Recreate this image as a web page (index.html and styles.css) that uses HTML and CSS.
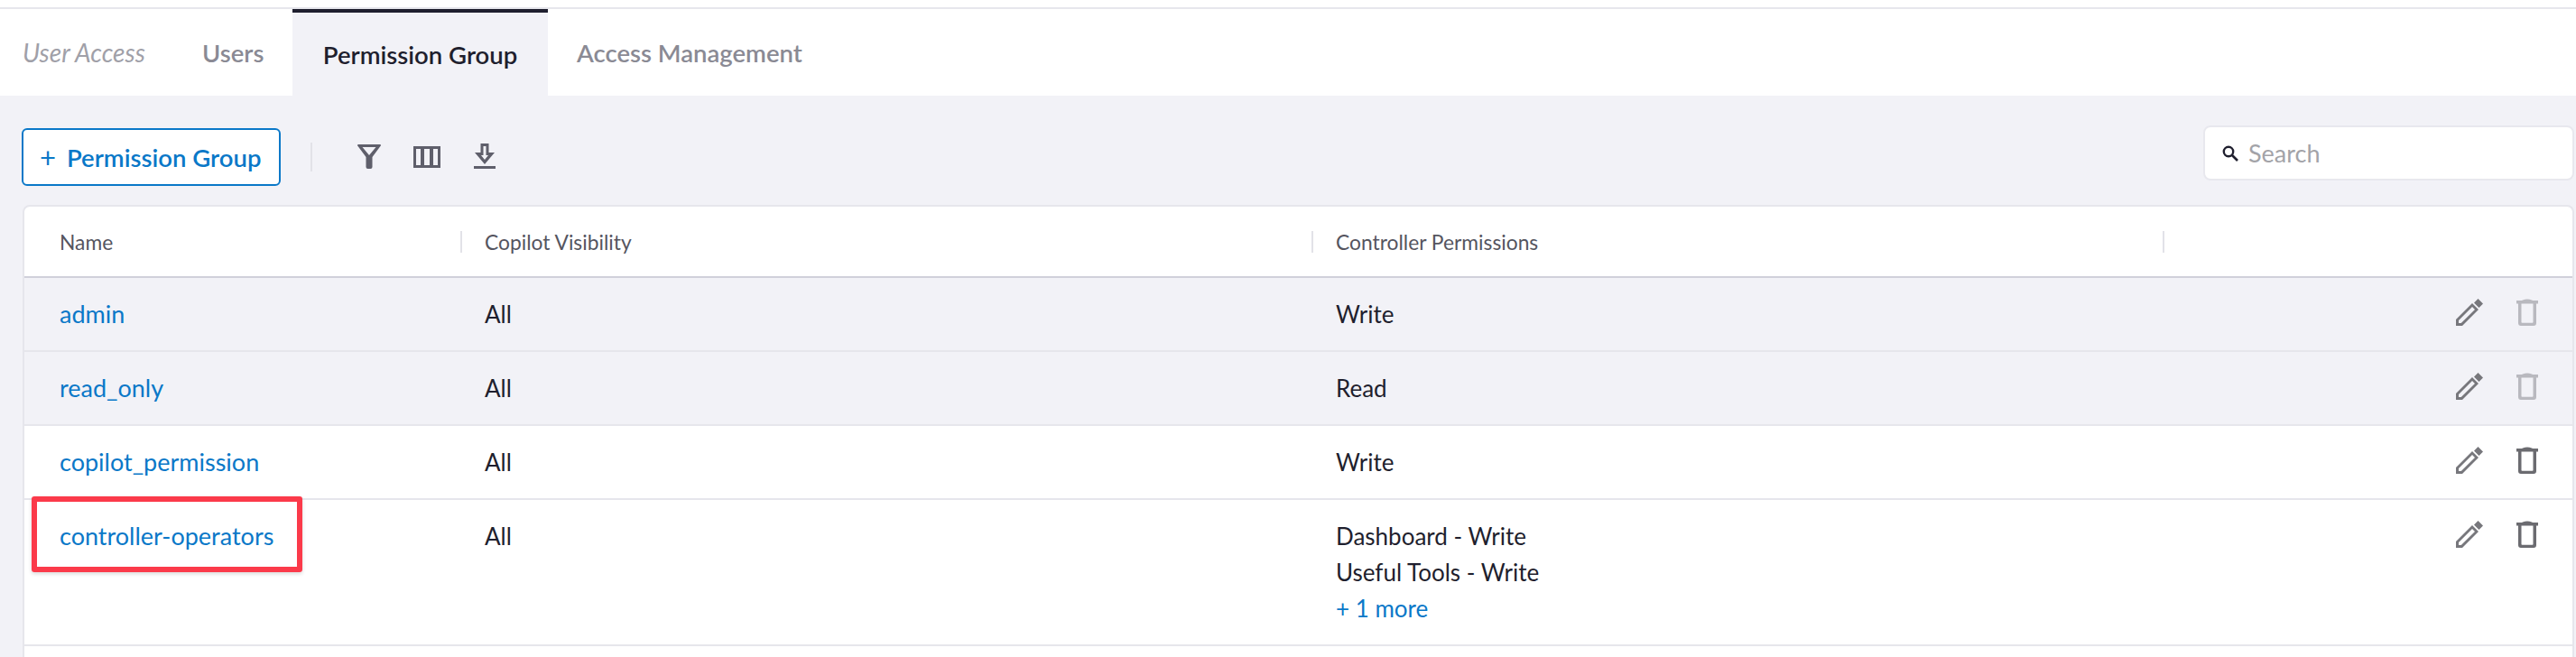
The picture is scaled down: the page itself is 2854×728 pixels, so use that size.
FILE: index.html
```html
<!DOCTYPE html>
<html lang="en">
<head>
    <meta charset="UTF-8">
    <title>Permission Group</title>
    <link rel="stylesheet" href="styles.css">
</head>
<body>
    <div class="top-strip"></div>
    <nav class="tabs">
        <span class="tabs-label">User Access</span>
        <a class="tab tab-users">Users</a>
        <a class="tab tab-active">Permission Group</a>
        <a class="tab">Access Management</a>
    </nav>

    <main class="content">
        <div class="toolbar">
            <button class="add-btn"><span class="plus">+</span>Permission Group</button>
            <span class="toolbar-sep"></span>
            <svg class="tool-icon filter-icon" width="26" height="27" viewBox="0 0 26 27"><path d="M1 0h24a1 1 0 0 1 .8 1.600L16.500 14V25a2 2 0 0 1-2 2h-3a2 2 0 0 1-2-2V14L.2 1.600A1 1 0 0 1 1 0zM5.500 3l7.500 9 7.500-9z" fill-rule="evenodd"/></svg>
            <svg class="tool-icon columns-icon" width="30" height="24" viewBox="0 0 30 24"><path d="M0 0h30v24H0zM3 3v18h5V3zM12 3v18h6V3zM22 3v18h5V3z" fill-rule="evenodd"/></svg>
            <svg class="tool-icon download-icon" width="24" height="28" viewBox="0 0 24 28"><path d="M7.500 0h9v10H23L12 23 1 10h6.500zM10.500 3v10H8l4 5 4-5h-2.500V3zM0 25h24v3H0z" fill-rule="evenodd"/></svg>
            <label class="search">
                <svg width="18" height="18" viewBox="0 0 18 18"><circle cx="7" cy="7" r="5.200" fill="none" stroke="#1f1f2e" stroke-width="2.400"/><path d="M11 11l6 6" stroke="#1f1f2e" stroke-width="2.600"/></svg>
                <input type="text" placeholder="Search">
            </label>
        </div>

        <div class="card">
            <div class="row head">
                <div class="cell"><span class="head-first">Name</span></div>
                <div class="cell"><span class="head-label">Copilot Visibility</span></div>
                <div class="cell"><span class="head-label">Controller Permissions</span></div>
                <div class="cell"><span class="head-label"></span></div>
            </div>
            <div class="row shaded">
                <div class="cell"><a class="link name-link">admin</a></div>
                <div class="cell">All</div>
                <div class="cell">Write</div>
                <div class="cell actions">
                    <svg class="pencil" width="30" height="30" viewBox="0 0 30 30"><use href="#pencil"/></svg>
                    <svg class="trash off" width="24" height="30" viewBox="0 0 24 30"><use href="#trash"/></svg>
                </div>
            </div>
            <div class="row shaded">
                <div class="cell"><a class="link name-link">read_only</a></div>
                <div class="cell">All</div>
                <div class="cell">Read</div>
                <div class="cell actions">
                    <svg class="pencil" width="30" height="30" viewBox="0 0 30 30"><use href="#pencil"/></svg>
                    <svg class="trash off" width="24" height="30" viewBox="0 0 24 30"><use href="#trash"/></svg>
                </div>
            </div>
            <div class="row">
                <div class="cell"><a class="link name-link">copilot_permission</a></div>
                <div class="cell">All</div>
                <div class="cell">Write</div>
                <div class="cell actions">
                    <svg class="pencil" width="30" height="30" viewBox="0 0 30 30"><use href="#pencil"/></svg>
                    <svg class="trash" width="24" height="30" viewBox="0 0 24 30"><use href="#trash"/></svg>
                </div>
            </div>
            <div class="row">
                <div class="cell">
                    <a class="link name-link">controller-operators</a>
                    <span class="highlight"></span>
                </div>
                <div class="cell">All</div>
                <div class="cell">
                    <div>Dashboard - Write</div>
                    <div>Useful Tools - Write</div>
                    <a class="link">+ 1 more</a>
                </div>
                <div class="cell actions">
                    <svg class="pencil" width="30" height="30" viewBox="0 0 30 30"><use href="#pencil"/></svg>
                    <svg class="trash" width="24" height="30" viewBox="0 0 24 30"><use href="#trash"/></svg>
                </div>
            </div>
            <div class="row-empty"></div>
        </div>
    </main>

    <svg class="defs" width="0" height="0">
        <symbol id="pencil" viewBox="0 0 30 30"><path d="M20 4.500L24.500 0 30 5.500 25.500 10zM0 30v-7L18 5 25 12 7 30zM3 27h2.800L21 12l-3-3L3 24z" fill-rule="evenodd"/></symbol>
        <symbol id="trash" viewBox="0 0 24 30"><path d="M7 1.500Q12-.500 17 1.500L18 2h6v3.500H0V2h6zM2 5.500h20V27a3 3 0 0 1-3 3H5a3 3 0 0 1-3-3zM5.500 5.500V26a.8.8 0 0 0 .8.8h11.400a.8.8 0 0 0 .8-.8V5.500z" fill-rule="evenodd"/></symbol>
    </svg>
</body>
</html>
```

FILE: styles.css
```css
html, body {
    margin: 0;
    height: 728px;
    overflow: hidden;
}
body {
    font-family: "Lato", "Noto Sans", sans-serif;
    font-size: 26px;
    color: #1f1f2e;
    background-color: #f2f2f7;
}
.top-strip {
    height: 8px;
    background-color: #fff;
    border-bottom: 2px solid #e6e6ec;
}
.defs {
    position: absolute;
}

/* tabs */
.tabs {
    display: flex;
    align-items: stretch;
    height: 96px;
    background-color: #fff;
    color: #8a8a94;
    font-size: 27.500px;
    font-weight: 600;
}
.tabs-label {
    display: flex;
    align-items: center;
    width: 198px;
    padding-left: 25px;
    box-sizing: border-box;
    font-size: 28px;
    font-style: italic;
    font-weight: 400;
    color: #a0a0a8;
}
.tab {
    display: flex;
    align-items: center;
    padding: 0 32px;
}
.tab-users {
    width: 126px;
    box-sizing: border-box;
    padding: 0 0 0 26px;
}
.tab-active {
    box-sizing: border-box;
    width: 283px;
    justify-content: center;
    padding: 0;
    background-color: #f2f2f7;
    color: #1f1f2e;
    border-top: 4px solid #1f1f2e;
}

/* toolbar */
.content {
    padding: 33px 2px 0 25px;
}
.toolbar {
    display: flex;
    align-items: flex-start;
    height: 73px;
    margin-bottom: 15px;
}
.add-btn {
    display: flex;
    align-items: center;
    width: 287px;
    height: 64px;
    margin: 3px 0 0 -1px;
    padding: 0 0 0 18px;
    border: 2px solid #0a78c8;
    border-radius: 6px;
    background-color: #fff;
    color: #0a78c8;
    font: inherit;
    font-size: 27.500px;
    font-weight: 600;
}
.plus {
    margin-right: 12px;
    font-size: 31px;
    font-weight: 400;
}
.toolbar-sep {
    width: 2px;
    height: 32px;
    margin: 19px 50px 0 33px;
    background-color: #e2e2e8;
}
.tool-icon {
    fill: #5f5f6b;
}
.filter-icon {
    margin-top: 21px;
}
.columns-icon {
    margin: 23px 0 0 36px;
}
.download-icon {
    margin: 20px 0 0 37px;
}
.search {
    display: flex;
    align-items: center;
    box-sizing: border-box;
    width: 411px;
    height: 61px;
    margin-left: auto;
    padding-left: 19px;
    border: 2px solid #e8e8ee;
    border-radius: 8px;
    background-color: #fff;
}
.search input {
    width: 300px;
    margin-left: 11px;
    padding: 0;
    border: none;
    outline: none;
    font: inherit;
    font-size: 27px;
    color: #1f1f2e;
}
.search input::placeholder {
    color: #a3a3a8;
}

/* table */
.card {
    border: 2px solid #e6e6ec;
    border-bottom: none;
    border-radius: 8px 8px 0 0;
    background-color: #fff;
    overflow: hidden;
}
.row {
    display: grid;
    grid-template-columns: 483px 943px 943px 1fr;
    border-bottom: 2px solid #e6e6ec;
    line-height: 40px;
}
.shaded {
    background-color: #f2f2f7;
}
.cell {
    position: relative;
    min-height: 40px;
    padding: 20px 0 20px 27px;
}
.cell:first-child {
    padding-left: 39px;
}
.head {
    height: 77px;
    align-items: center;
    border-bottom-color: #d0d0da;
    font-size: 22.800px;
    color: #55555f;
}
.head .cell {
    min-height: 0;
    padding: 0;
}
.head-first {
    padding-left: 39px;
}
.head-label {
    display: block;
    height: 24px;
    padding-left: 25px;
    border-left: 2px solid #e2e2e8;
    line-height: 24px;
}
.link {
    color: #0a78c8;
}
.name-link {
    font-size: 27px;
}
.actions {
    display: flex;
    align-items: flex-start;
    justify-content: flex-end;
    gap: 37px;
    padding: 23px 38px 0 0;
}
.pencil {
    fill: #77777c;
}
.trash {
    fill: #6b6b70;
}
.trash.off {
    fill: #b9b9bf;
}
.highlight {
    position: absolute;
    left: 8px;
    top: -4px;
    width: 300px;
    height: 84px;
    box-sizing: border-box;
    border: 6px solid #fb3a4a;
    border-radius: 3px;
    box-shadow: 0 2px 4px rgba(0, 0, 0, 0.15);
}
.row-empty {
    height: 20px;
}
```
